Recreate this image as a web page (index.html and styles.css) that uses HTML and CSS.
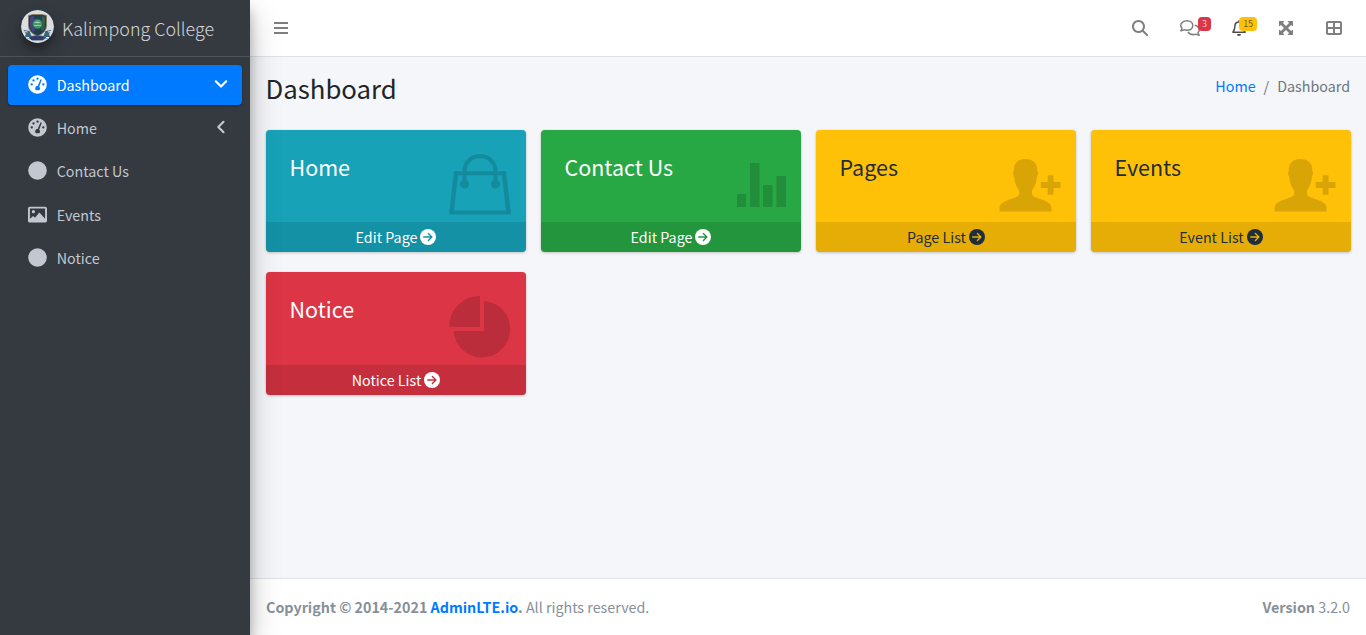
FILE: index.html
```html
<!DOCTYPE html>
<html lang="en">
<head>
<meta charset="utf-8">
<title>Dashboard</title>
<link rel="stylesheet" href="styles.css">
</head>
<body>
<svg class="defs" width="0" height="0">
  <symbol id="gauge" viewBox="0 0 20 20"><path fill-rule="evenodd" d="M10 .2a9.8 9.8 0 1 0 0 19.600a9.800 9.800 0 1 0 0-19.600zM10 2.500a1.250 1.250 0 1 1 0 2.500a1.250 1.250 0 1 1 0-2.500zM5.800 4.400a1.250 1.250 0 1 1 0 2.500a1.250 1.250 0 1 1 0-2.500zM3.900 8.600a1.250 1.250 0 1 1 0 2.500a1.250 1.250 0 1 1 0-2.500zM16.100 8.600a1.250 1.250 0 1 1 0 2.500a1.250 1.250 0 1 1 0-2.500zM13 4.900q.9-.9 1.500.1L11.800 12.300A2.500 2.500 0 0 1 11.700 16H8.300A2.500 2.500 0 0 1 10.200 11.700z"/></symbol>
  <symbol id="dot" viewBox="0 0 20 20"><circle cx="10" cy="10" r="9.800"/></symbol>
  <symbol id="image" viewBox="0 0 20 20"><path fill-rule="evenodd" d="M2 1.800H18a2 2 0 0 1 2 2V16.500a2 2 0 0 1-2 2H2a2 2 0 0 1-2-2V3.800a2 2 0 0 1 2-2zM2 3.600V14.500L5.500 11.500L7.300 13.300L12 8L18 14.500V3.600zM5.700 5.300a1.700 1.700 0 1 1 0 3.400a1.700 1.700 0 1 1 0-3.400z"/></symbol>
  <symbol id="arrow" viewBox="0 0 16 16"><circle cx="8" cy="8" r="8"/><path class="cut" d="M3.700 8H11.700M8.400 4.500L11.900 8L8.400 11.500"/></symbol>
  <symbol id="person-add" viewBox="0 0 62 54"><path d="M26 0C34 0 39 4.500 38.500 12C40 15 38.500 17 38 18C37.500 25 35.500 29 33 32V36C34 41 53 41 53 50V53.500H0V50C0 41 19 41 20 36V32C17.500 29 15.500 25 15 18C14 17 13 15 14.500 12C14 4.500 19 0 26 0zM49 16.500h6v7h7v6h-7v7h-6v-7h-7v-6h7z"/></symbol>
</svg>
<div class="wrapper">
  <aside class="sidebar">
    <a class="brand">
      <svg class="logo" viewBox="0 0 33 33"><circle cx="16.500" cy="16.500" r="16.500" fill="#dcdde1"/><path d="M2.500 20l6 1 2 5 6-1 6 1 2-5 6-1-2.500 4 1.500 4-5 .5-3 2H11.500l-3-2-5-.5L5 24z" fill="#37657b"/><path d="M9 27l7-1.500 7 1.500-1 3H10z" fill="#343968"/><path d="M3.500 21.500l3 .5M27 22l3-.5M5 27.500h3M25 27.500h3" stroke="#dfe4e8"/><path d="M7.500 5.500L12 4.500h9l4.500 1V16q-.5 7-9 10-8.500-3-9-10z" fill="#203f4b" stroke="#8a7854" stroke-width=".8"/><path d="M9 7l4-1 1 14-2 2q-3-3-3-7z" fill="#49408b"/><path d="M24 7l-3-1-1 14 2 1q2-3 2-6z" fill="#315f4d"/><circle cx="16.500" cy="14" r="5" fill="#4d9563" stroke="#1d625a"/><path d="M13 13q3-3 7 0z" fill="#a6cbd0"/><path d="M13 15.500h7" stroke="#b3c65a"/></svg>
      <span class="brand-text">Kalimpong College</span>
    </a>
    <nav class="menu">
      <a class="item active"><svg class="icon"><use href="#gauge"/></svg><span>Dashboard</span><svg class="chev" viewBox="0 0 14 14"><path d="M1.800 4.300L7 9.500L12.200 4.300"/></svg></a>
      <a class="item"><svg class="icon"><use href="#gauge"/></svg><span>Home</span><svg class="chev" viewBox="0 0 14 14"><path d="M9.500 1.800L4.300 7L9.500 12.200"/></svg></a>
      <a class="item"><svg class="icon"><use href="#dot"/></svg><span>Contact Us</span></a>
      <a class="item"><svg class="icon image"><use href="#image"/></svg><span>Events</span></a>
      <a class="item"><svg class="icon"><use href="#dot"/></svg><span>Notice</span></a>
    </nav>
  </aside>
  <div class="main">
    <header class="topbar">
      <a class="nav-link"><svg width="14" height="16" viewBox="0 0 14 16"><path d="M0 2h14v2H0zM0 7h14v2H0zM0 12h14v2H0z"/></svg></a>
      <div class="nav-right">
        <a class="nav-link"><svg width="16" height="16" viewBox="0 0 512 512"><path d="M416 208c0 45.900-14.900 88.300-40 122.700L502.600 457.400c12.500 12.500 12.500 32.800 0 45.300s-32.800 12.500-45.300 0L330.700 376c-34.400 25.200-76.800 40-122.700 40C93.100 416 0 322.900 0 208S93.100 0 208 0S416 93.100 416 208zM208 352a144 144 0 1 0 0-288a144 144 0 1 0 0 288z"/></svg></a>
        <a class="nav-link"><svg width="20" height="16" viewBox="0 0 20 16"><g class="line"><path d="M7 .75C10.500.75 12.750 2.900 12.750 5.500S10.500 10.250 7 10.250C6 10.250 5.100 10.100 4.300 9.700C3.300 10.400 2.200 10.800.8 10.700C1.500 9.900 1.900 9.100 2 8.200C1.200 7.400.75 6.500.75 5.500C.75 2.900 3.500.75 7 .75z"/><path d="M14.700 5.200C17.400 5.800 19.250 7.500 19.250 9.800C19.250 10.900 18.800 11.800 18 12.600C18.100 13.600 18.500 14.400 19.200 15.200C17.900 15.200 16.700 14.800 15.700 14.200C12.800 15 9.400 14.200 8 12"/></g></svg><span class="badge red">3</span></a>
        <a class="nav-link bell"><svg width="14" height="16" viewBox="0 0 14 16"><path class="line" d="M7 .2V2M7 1.900C4.500 1.900 2.900 3.700 2.900 6.200C2.900 9 2.200 10.300.9 12.200H13.100C11.800 10.300 11.100 9 11.100 6.200C11.100 3.700 9.500 1.900 7 1.900z"/><path d="M5 14h4a2 2 0 0 1-4 0z"/></svg><span class="badge yellow">15</span></a>
        <a class="nav-link"><svg width="16" height="16" viewBox="0 0 16 16"><path d="M1 1h5.500L4.900 2.900L8 6L11.100 2.900L9.500 1H15V6.500L13.100 4.900L10 8L13.100 11.100L15 9.500V15H9.500L11.100 13.100L8 10L4.900 13.100L6.500 15H1V9.500L2.900 11.100L6 8L2.900 4.900L1 6.500z"/></svg></a>
        <a class="nav-link"><svg width="16" height="16" viewBox="0 0 16 16"><path fill-rule="evenodd" d="M2 1h12a2 2 0 0 1 2 2v10a2 2 0 0 1-2 2H2a2 2 0 0 1-2-2V3a2 2 0 0 1 2-2zM2 3v4h5V3zM9 3v4h5V3zM2 9v4h5V9zM9 9v4h5V9z"/></svg></a>
      </div>
    </header>
    <main class="content">
      <div class="heading"><h1>Dashboard</h1><div class="crumbs"><a>Home</a><span class="slash">/</span><span>Dashboard</span></div></div>
      <div class="cards">
        <section class="card info"><div class="inner"><h3>Home</h3><svg class="art" width="62" height="61" viewBox="0 0 62 62" preserveAspectRatio="none"><path fill-rule="evenodd" d="M5 17.500H57L62 61.500H0zM9 21.500L5 57.500H57L53 21.500z"/><path class="stroke" d="M15.500 29V17.500a15.500 15.500 0 0 1 31 0V29"/><circle cx="15.500" cy="30.500" r="4.500"/><circle cx="46.500" cy="30.500" r="4.500"/></svg></div><a class="more">Edit Page<svg><use href="#arrow"/></svg></a></section>
        <section class="card success"><div class="inner"><h3>Contact Us</h3><svg class="art bars" width="49" height="44" viewBox="0 0 49 44"><path d="M0 31h9v13H0zM13 0h9.500v44H13zM26 22h9.500v22H26zM39.500 13H49v31h-9.500z"/></svg></div><a class="more">Edit Page<svg><use href="#arrow"/></svg></a></section>
        <section class="card warning"><div class="inner"><h3>Pages</h3><svg class="art person" width="62" height="53" preserveAspectRatio="none"><use href="#person-add"/></svg></div><a class="more">Page List<svg><use href="#arrow"/></svg></a></section>
        <section class="card warning"><div class="inner"><h3>Events</h3><svg class="art person" width="62" height="53" preserveAspectRatio="none"><use href="#person-add"/></svg></div><a class="more">Event List<svg><use href="#arrow"/></svg></a></section>
        <section class="card danger"><div class="inner"><h3>Notice</h3><svg class="art" width="62" height="62" viewBox="0 0 62 62"><path d="M31 0V31H0A31 31 0 0 1 31 0zM35 5A28.300 28.300 0 1 1 4.700 35H35z"/></svg></div><a class="more">Notice List<svg><use href="#arrow"/></svg></a></section>
      </div>
    </main>
    <footer class="footer"><div><strong>Copyright © 2014-2021 <a>AdminLTE.io</a>.</strong> All rights reserved.</div><div><strong>Version</strong> 3.2.0</div></footer>
  </div>
</div>
</body>
</html>
```
FILE: styles.css
```css
* { box-sizing: border-box; }
body { margin: 0; font-family: "Noto Sans CJK SC", "Noto Sans", sans-serif; font-size: 14.310px; line-height: 24px; color: #212529; }
h1, h3 { margin: 0; font-weight: 400; }
svg { display: block; flex: none; }
.defs { position: absolute; }
.wrapper { display: flex; height: 635px; overflow: hidden; }
.sidebar { width: 250px; flex: none; background: #343a40; position: relative; z-index: 2; box-shadow: 0 14px 28px rgba(0,0,0,.25), 0 10px 10px rgba(0,0,0,.22); }
.brand { display: flex; height: 57px; padding: 10px 0 0 21px; border-bottom: 1px solid #4b545c; color: rgba(255,255,255,.8); }
.logo { width: 33px; height: 33px; border-radius: 50%; box-shadow: 0 10px 20px rgba(0,0,0,.19), 0 6px 6px rgba(0,0,0,.23); }
.brand-text { font-size: 17.900px; font-weight: 300; line-height: 30px; margin: 3px 0 0 8px; white-space: nowrap; }
.menu { display: flex; flex-direction: column; gap: 3.300px; padding: 8px; }
.item { display: flex; align-items: center; height: 40px; padding: 0 14px 0 20px; border-radius: 4px; color: #c2c7d0; }
.item:nth-child(3) span { margin-top: -1px; }
.item.active { background: #007bff; color: #fff; box-shadow: 0 1px 3px rgba(0,0,0,.12), 0 1px 2px rgba(0,0,0,.24); }
.icon { width: 19px; height: 19px; margin: 0 9.700px 2px 0; fill: currentColor; }
.image { margin-bottom: 1px; }
.chev { width: 14px; height: 14px; margin: 0 0 2px auto; fill: none; stroke: currentColor; stroke-width: 2.200; stroke-linecap: round; stroke-linejoin: round; }
.main { flex: 1; display: flex; flex-direction: column; background: #f4f6f9; }
.topbar { height: 57px; flex: none; display: flex; align-items: center; justify-content: space-between; padding: 0 8px; background: #fff; border-bottom: 1px solid #dee2e6; }
.nav-right { display: flex; }
.nav-link { position: relative; padding: 0 16px; color: #7f7f7f; fill: currentColor; }
.bell { color: #4c4c4c; }
.line { fill: none; stroke: currentColor; stroke-width: 1.500; stroke-linejoin: round; }
.badge { position: absolute; top: -3px; right: 5px; height: 14px; padding: 0 4px; border-radius: 4px; font-size: 9.200px; font-weight: 300; line-height: 13px; }
.red { background: #dc3545; color: #fff; }
.yellow { background: #ffc107; color: #1f2d3d; }
.content { flex: 1; padding: 15px 15px 0 16px; }
.heading { display: flex; justify-content: space-between; height: 58px; padding-right: 1px; }
h1 { font-size: 25.750px; line-height: 35px; margin: -2px 0 0 -.5px; }
.crumbs { display: flex; gap: 8px; margin-top: 2px; color: #6c757d; }
a { color: #007bff; }
.cards { display: grid; grid-template-columns: repeat(4, 260px); gap: 20px 15px; }
.card { display: flex; flex-direction: column; height: 122.400px; border-radius: 4px; overflow: hidden; color: #fff; box-shadow: 0 0 1px rgba(0,0,0,.125), 0 1px 3px rgba(0,0,0,.2); }
.inner { height: 92.400px; display: flex; justify-content: space-between; padding: 24px 15px 0 23.500px; }
h3 { font-size: 21.500px; line-height: 29px; margin-top: -2px; }
.art { fill: rgba(0,0,0,.15); }
.info .art { fill: #148a9d; }
.info .stroke { fill: none; stroke: #148a9d; stroke-width: 4; }
.bars { margin-top: 9px; }
.person { margin-top: 5px; }
.more { display: flex; align-items: center; justify-content: center; gap: 3px; height: 30px; background: rgba(0,0,0,.1); color: inherit; }
.more svg { width: 16px; height: 16px; fill: currentColor; }
.cut { fill: none; stroke: var(--foot); stroke-width: 1.400; stroke-linecap: round; stroke-linejoin: round; }
.info { background: #17a2b8; --foot: #1592a6; }
.success { background: #28a745; --foot: #24963e; }
.warning { background: #ffc107; color: #1f2d3d; --foot: #e6ae06; }
.danger { background: #dc3545; --foot: #c6303e; }
.footer { height: 57px; flex: none; display: flex; justify-content: space-between; padding: 16px 16px 0; background: #fff; border-top: 1px solid #dee2e6; color: #869099; }
```
